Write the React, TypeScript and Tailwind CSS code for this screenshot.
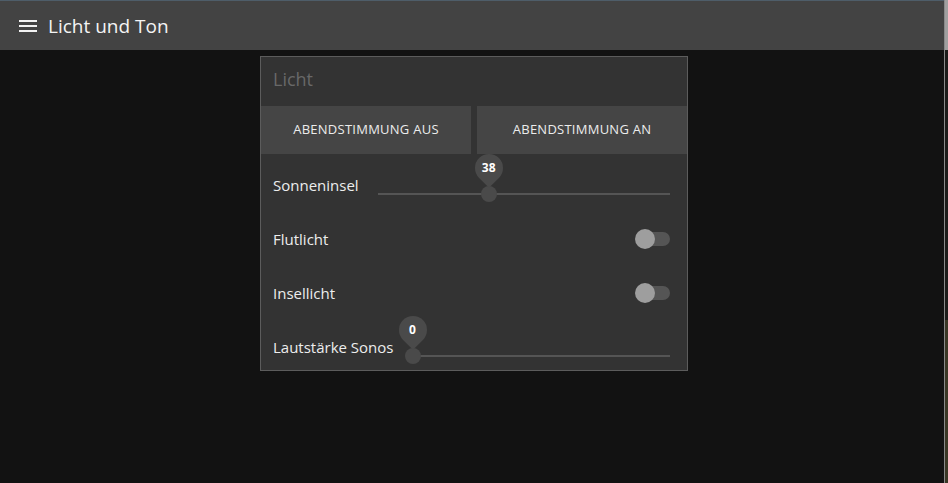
import React from "react";

const font = { fontFamily: '"Open Sans", "Noto Sans", "Liberation Sans", sans-serif' };

function Slider({ value }: { value: number }) {
  return (
    <div className="relative flex-1 h-full ml-[19px]">
      <div className="absolute left-0 right-0 top-[35px] h-[2px] bg-[#555555]" />
      <div
        className="absolute top-[36px]"
        style={{ left: `${value}%` }}
      >
        <div className="absolute w-[16px] h-[16px] -left-[8px] -top-[8px] rounded-full bg-[#4a4a4a]" />
        <div className="absolute w-[28px] h-[28px] -left-[14px] -top-[40px] rounded-tl-full rounded-tr-full rounded-br-full bg-[#4a4a4a] -rotate-45" />
        <div className="absolute w-[28px] h-[28px] -left-[14px] -top-[40px] flex items-center justify-center text-[12px] font-bold text-white">
          {value}
        </div>
      </div>
    </div>
  );
}

function Toggle() {
  return (
    <div className="relative w-[35px] h-[20px]">
      <div className="absolute right-0 top-[3px] w-[26px] h-[14px] rounded-full bg-[#555555]" />
      <div className="absolute left-0 top-0 w-[20px] h-[20px] rounded-full bg-[#9e9e9e]" />
    </div>
  );
}

export default function App() {
  return (
    <div className="flex w-[948px] h-[483px] overflow-hidden bg-[#121212]" style={font}>
      <div className="w-[944px] h-full flex flex-col bg-[#121212]">
        <header className="h-[50px] shrink-0 bg-[#434343] border-t border-[#4e5d69] flex items-center">
          <svg className="ml-[19px]" width="18" height="14" viewBox="0 0 18 14">
            <rect x="0" y="1" width="18" height="2" fill="#f2f2f2" />
            <rect x="0" y="6" width="18" height="2" fill="#f2f2f2" />
            <rect x="0" y="11" width="18" height="2" fill="#f2f2f2" />
          </svg>
          <span className="ml-[11px] pt-[2px] text-[19px] text-[#f4f4f4] leading-none">Licht und Ton</span>
        </header>
        <div className="pt-[6px] pl-[260px]">
          <div className="w-[428px] h-[315px] border border-[#5c5c5c] bg-[#333333] overflow-hidden">
            <div className="h-[49px] flex items-center pl-[12px] pb-[4px] text-[18px] text-[#686868]">Licht</div>
            <div className="flex gap-[6px]">
              <button className="w-[210px] h-[48px] bg-[#454545] text-[13px] tracking-[0.25px] text-[#ececec] uppercase">Abendstimmung aus</button>
              <button className="w-[210px] h-[48px] bg-[#454545] text-[13px] tracking-[0.25px] text-[#ececec] uppercase">Abendstimmung an</button>
            </div>
            <div className="pt-[4px] pl-[12px] pr-[17px] text-[15px] text-[#ededed]">
              <div className="h-[54px] flex items-center">
                <span>Sonneninsel</span>
                <Slider value={38} />
              </div>
              <div className="h-[54px] flex items-center justify-between">
                <span>Flutlicht</span>
                <Toggle />
              </div>
              <div className="h-[54px] flex items-center justify-between">
                <span>Insellicht</span>
                <Toggle />
              </div>
              <div className="h-[54px] flex items-center">
                <span>Lautstärke Sonos</span>
                <Slider value={0} />
              </div>
            </div>
          </div>
        </div>
      </div>
      <div className="w-[1px] h-full bg-[#8a8a8a]" />
      <div className="w-[3px] h-full flex flex-col">
        <div className="h-[50px] bg-[#a0a0a0]" />
        <div className="h-[270px] bg-[#1c1c1a]" />
        <div className="flex-1 bg-[#3a3826]" />
      </div>
    </div>
  );
}
